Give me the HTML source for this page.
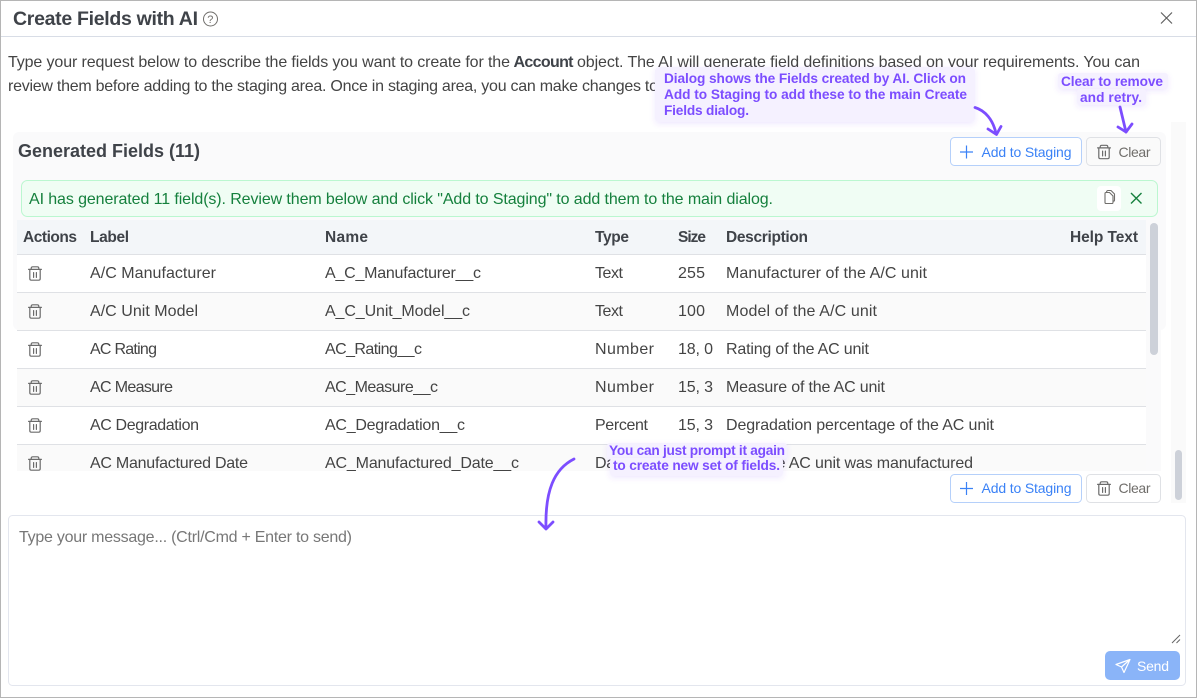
<!DOCTYPE html>
<html lang="en">
<head>
<meta charset="utf-8">
<title>Create Fields with AI</title>
<style>
html,body{margin:0;padding:0;background:#fff;width:1197px;height:698px;overflow:hidden}
svg{display:block;position:absolute;left:0;top:0}
text{font-family:"Liberation Sans",Arial,sans-serif;font-size:16px;fill:#444;white-space:pre}
.b{font-weight:700}
.h{font-weight:700;fill:#3f4349;font-size:15.5px}
.c{font-weight:700;fill:#7c4dff;font-size:13.7px}
.g{fill:#15803d}
.blue{fill:#3b82f6;font-size:14px}
.gr{fill:#706e6b;font-size:14px}
.ar{fill:none;stroke:#7c4dff;stroke-width:2.8;stroke-linecap:round;stroke-linejoin:round}
</style>
</head>
<body>
<svg width="1197" height="698" viewBox="0 0 1197 698" xmlns="http://www.w3.org/2000/svg">
<defs>
<clipPath id="tc"><rect x="13" y="218" width="1150" height="253"/></clipPath>
<filter id="sh" x="-10%" y="-30%" width="120%" height="170%"><feDropShadow dx="0" dy="2" stdDeviation="3" flood-color="#7c4dff" flood-opacity="0.12"/></filter>
<symbol id="trash" viewBox="0 0 14 15" overflow="visible">
<path d="M.6 3.4h12.8M3.2 3.2V2.4c0-1 .6-1.6 1.5-1.6h4.6c.9 0 1.5.6 1.5 1.6v.8M1.8 3.6v9c0 .9.6 1.6 1.5 1.6h7.4c.9 0 1.500-.7 1.500-1.600v-9M5.600 6.600v4.800M8.400 6.600v4.800" fill="none" stroke="#6b6b6b" stroke-width="1.200" stroke-linecap="round" stroke-linejoin="round"/>
</symbol>
</defs>

<rect x="0" y="0" width="1197" height="698" fill="#fff"/>

<!-- header -->
<text x="13" y="25" class="b" style="font-size:19.5px;fill:#3f4349" textLength="185">Create Fields with AI</text>
<circle cx="210.500" cy="19" r="7" fill="none" stroke="#706e6b" stroke-width="1"/>
<text x="207.300" y="23" style="font-size:11px;fill:#706e6b">?</text>
<path d="M1161 12.500l11 11M1172 12.500l-11 11" stroke="#5f5f5f" stroke-width="1.200" fill="none"/>
<rect x="0" y="36" width="1197" height="1" fill="#d8dde6"/>

<!-- intro -->
<text x="8" y="67" textLength="502">Type your request below to describe the fields you want to create for the</text>
<text x="513.500" y="67" class="b" textLength="60" style="fill:#3f4349">Account</text>
<text x="577" y="67" textLength="563">object. The AI will generate field definitions based on your requirements. You can</text>
<text x="8" y="91" textLength="650">review them before adding to the staging area. Once in staging area, you can make changes to</text>

<!-- outer scroll track -->
<rect x="1171" y="122" width="15" height="381" fill="#fafafa"/>
<rect x="1175" y="450" width="7" height="50" rx="3.500" fill="#cdd1d9"/>

<!-- panel -->
<rect x="13" y="132" width="1153" height="198" rx="6" fill="#fafafb"/>
<text x="18" y="157" class="b" style="font-size:18px;fill:#3f4349" textLength="182">Generated Fields (11)</text>

<!-- top buttons -->
<rect x="950.500" y="137.500" width="131" height="28" rx="4" fill="#fff" stroke="#b5d0fa"/>
<path d="M966.500 145.500v13M960 152h13" stroke="#3b82f6" stroke-width="1.200" fill="none"/>
<text x="981.500" y="157" class="blue" textLength="90">Add to Staging</text>
<rect x="1086.500" y="137.500" width="74" height="28" rx="4" fill="#fafafa" stroke="#dfe1e5"/>
<use href="#trash" x="1097" y="144.500" width="14" height="15"/>
<text x="1118.500" y="157" class="gr" textLength="32">Clear</text>

<!-- alert -->
<rect x="21.500" y="180.500" width="1136" height="36" rx="6" fill="#f0fdf4" stroke="#bbf7d0"/>
<text x="29" y="204" class="g" textLength="744">AI has generated 11 field(s). Review them below and click "Add to Staging" to add them to the main dialog.</text>
<rect x="1097" y="186" width="24" height="25" rx="4" fill="#fff"/>
<path d="M1106 192.500h3.500l3.500 3.500v6.500c0 .6-.4 1-1 1h-6c-.6 0-1-.4-1-1v-9c0-.6.4-1 1-1zM1106.500 192c.2-1 .8-1.500 1.500-1.500h3l3.500 3.500v6c0 .8-.4 1.200-1 1.200" fill="none" stroke="#706e6b" stroke-width="1.100" stroke-linejoin="round"/>
<path d="M1131 193l10.500 10.500M1141.500 193L1131 203.500" stroke="#15803d" stroke-width="1.400" fill="none"/>

<!-- table -->
<g clip-path="url(#tc)">
<rect x="17" y="218" width="1144" height="253" fill="#fafafb"/>
<rect x="17" y="220" width="1129" height="34" fill="#f3f6f9"/>
<rect x="17" y="255" width="1129" height="37" fill="#fff"/>
<rect x="17" y="293" width="1129" height="37" fill="#fafafa"/>
<rect x="17" y="331" width="1129" height="37" fill="#fff"/>
<rect x="17" y="369" width="1129" height="37" fill="#fafafa"/>
<rect x="17" y="407" width="1129" height="37" fill="#fff"/>
<rect x="17" y="445" width="1129" height="37" fill="#fafafa"/>
<rect x="17" y="254" width="1129" height="1" fill="#dfe1e5"/>
<rect x="17" y="292" width="1129" height="1" fill="#dfe1e5"/>
<rect x="17" y="330" width="1129" height="1" fill="#dfe1e5"/>
<rect x="17" y="368" width="1129" height="1" fill="#dfe1e5"/>
<rect x="17" y="406" width="1129" height="1" fill="#dfe1e5"/>
<rect x="17" y="444" width="1129" height="1" fill="#dfe1e5"/>

<text x="23" y="242" class="h" textLength="54">Actions</text>
<text x="90" y="242" class="h" textLength="39">Label</text>
<text x="325" y="242" class="h" textLength="43">Name</text>
<text x="595" y="242" class="h" textLength="34">Type</text>
<text x="678" y="242" class="h" textLength="28">Size</text>
<text x="726" y="242" class="h" textLength="82">Description</text>
<text x="1070" y="242" class="h" textLength="68">Help Text</text>

<use href="#trash" x="28" y="266" width="14" height="15"/>
<text x="90" y="278" textLength="126">A/C Manufacturer</text>
<text x="325" y="278" textLength="156">A_C_Manufacturer__c</text>
<text x="595" y="278" textLength="28">Text</text>
<text x="678" y="278" textLength="27">255</text>
<text x="726" y="278" textLength="201">Manufacturer of the A/C unit</text>

<use href="#trash" x="28" y="304" width="14" height="15"/>
<text x="90" y="316" textLength="108">A/C Unit Model</text>
<text x="325" y="316" textLength="145">A_C_Unit_Model__c</text>
<text x="595" y="316" textLength="28">Text</text>
<text x="678" y="316" textLength="27">100</text>
<text x="726" y="316" textLength="151">Model of the A/C unit</text>

<use href="#trash" x="28" y="342" width="14" height="15"/>
<text x="90" y="354" textLength="67">AC Rating</text>
<text x="325" y="354" textLength="97">AC_Rating__c</text>
<text x="595" y="354" textLength="59">Number</text>
<text x="678" y="354" textLength="35">18, 0</text>
<text x="726" y="354" textLength="143">Rating of the AC unit</text>

<use href="#trash" x="28" y="380" width="14" height="15"/>
<text x="90" y="392" textLength="83">AC Measure</text>
<text x="325" y="392" textLength="113">AC_Measure__c</text>
<text x="595" y="392" textLength="59">Number</text>
<text x="678" y="392" textLength="35">15, 3</text>
<text x="726" y="392" textLength="159">Measure of the AC unit</text>

<use href="#trash" x="28" y="418" width="14" height="15"/>
<text x="90" y="430" textLength="109">AC Degradation</text>
<text x="325" y="430" textLength="140">AC_Degradation__c</text>
<text x="595" y="430" textLength="53">Percent</text>
<text x="678" y="430" textLength="35">15, 3</text>
<text x="726" y="430" textLength="268">Degradation percentage of the AC unit</text>

<use href="#trash" x="28" y="456" width="14" height="15"/>
<text x="90" y="468" textLength="158">AC Manufactured Date</text>
<text x="325" y="468" textLength="194">AC_Manufactured_Date__c</text>
<text x="595" y="468" textLength="33">Date</text>
<text x="726" y="468" textLength="247">Date the AC unit was manufactured</text>

<rect x="1150" y="223" width="8" height="132" rx="4" fill="#cdd1d9"/>
</g>

<!-- bottom buttons -->
<rect x="950.500" y="474.500" width="131" height="28" rx="4" fill="#fff" stroke="#b5d0fa"/>
<path d="M966.500 482v13M960 488.500h13" stroke="#3b82f6" stroke-width="1.200" fill="none"/>
<text x="981.500" y="493" class="blue" textLength="90">Add to Staging</text>
<rect x="1086.500" y="474.500" width="74" height="28" rx="4" fill="#fff" stroke="#dfe1e5"/>
<use href="#trash" x="1097" y="481" width="14" height="15"/>
<text x="1118.500" y="493" class="gr" textLength="32">Clear</text>

<!-- textarea -->
<rect x="8.500" y="515.500" width="1177" height="170" rx="4" fill="#fff" stroke="#e3e6ee"/>
<text x="19" y="542" style="fill:#777" textLength="333">Type your message... (Ctrl/Cmd + Enter to send)</text>
<path d="M1172 643l8-8M1176.500 643l3.500-3.500" stroke="#666" stroke-width="1" fill="none"/>
<rect x="1105" y="651" width="75" height="29" rx="5" fill="#8ab4f8"/>
<path d="M1130 659.500l-14 5 5.500 2.500 2.500 5.500zM1121.500 667l8.500-7.500" fill="none" stroke="#fff" stroke-width="1.200" stroke-linejoin="round"/>
<text x="1137" y="671" style="fill:#fff;font-size:14px" textLength="32">Send</text>

<!-- callouts -->
<rect x="655" y="67" width="320" height="55" rx="4" fill="#f5f1ff" filter="url(#sh)"/>
<text x="664" y="83" class="c" textLength="302">Dialog shows the Fields created by AI. Click on</text>
<text x="664" y="99" class="c" textLength="303">Add to Staging to add these to the main Create</text>
<text x="664" y="115" class="c" textLength="85">Fields dialog.</text>
<path class="ar" d="M975 107.500c10 3 18 12 21 26"/>
<path class="ar" d="M988 129l8.500 5.500 4.500-8"/>

<rect x="1058" y="73" width="110" height="16" rx="3" fill="#f5f1ff" filter="url(#sh)"/>
<rect x="1077" y="89" width="69" height="16" rx="3" fill="#f5f1ff" filter="url(#sh)"/>
<text x="1061" y="86" class="c" textLength="102">Clear to remove</text>
<text x="1080" y="102" class="c" textLength="62">and retry.</text>
<path class="ar" d="M1120 107l6 25"/>
<path class="ar" d="M1118 127l8 5 6-8"/>

<rect x="607" y="443" width="180" height="16" rx="3" fill="#f5f1ff" filter="url(#sh)"/>
<rect x="610" y="458" width="173" height="18" rx="3" fill="#f5f1ff" filter="url(#sh)"/>
<text x="609" y="455" class="c" textLength="176">You can just prompt it again</text>
<text x="613" y="470" class="c" textLength="167">to create new set of fields.</text>
<path class="ar" d="M574 459c-20 10-29 32-28 69"/>
<path class="ar" d="M539 522l7 7 7-7"/>

<!-- window frame -->
<rect x="0.500" y="0.500" width="1196" height="697" fill="none" stroke="#b5b5b5"/>
</svg>
</body>
</html>
